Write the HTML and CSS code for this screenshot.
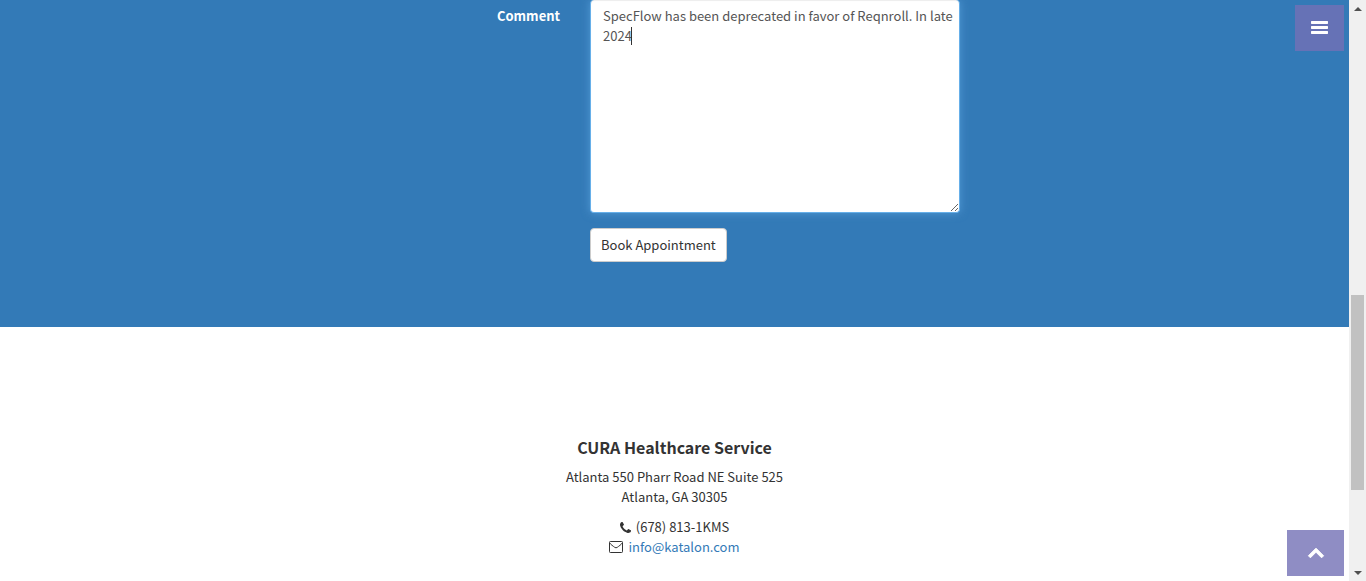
FILE: index.html
```
<!DOCTYPE html>
<html lang="en">
<head>
<meta charset="utf-8">
<title>CURA Healthcare Service</title>
<link rel="stylesheet" href="styles.css">
</head>
<body>
<div class="page">
  <main class="content">
    <section class="appointment">
      <form class="form">
        <label class="form-label" for="comment">Comment</label>
        <div class="field">
          <textarea class="comment" id="comment" name="comment">SpecFlow has been deprecated in favor of Reqnroll. In late 2024</textarea>
          <span class="caret"></span>
        </div>
        <button class="book" type="button">Book Appointment</button>
      </form>
    </section>
    <footer class="footer">
      <h4 class="footer-title">CURA Healthcare Service</h4>
      <p class="footer-text">Atlanta 550 Pharr Road NE Suite 525<br>Atlanta, GA 30305</p>
      <ul class="contacts">
        <li class="contact">
          <svg class="icon-phone" viewBox="0 0 1408 1408" aria-hidden="true"><path fill="currentColor" d="M1408 1112q0 27-10 70.500t-21 68.500q-21 50-122 106-94 51-186 51-27 0-53-3.500t-57.500-12.500-47-14.500-55.500-20.500-49-18q-98-35-175-83-127-79-264-216t-216-264q-48-77-83-175-3-9-18-49t-20.500-55.500-14.500-47-12.500-57.500-3.500-53q0-92 51-186 56-101 106-122 25-11 68.500-21t70.500-10q14 0 21 3 18 6 53 76 11 19 30 54t35 63.500 31 53.500q3 4 17.500 25t21.500 35.500 7 28.500q0 20-28.500 50t-62 55-62 53-28.500 46q0 9 5 22.500t8.500 20.500 14 24 11.500 19q76 137 174 235t235 174q2 1 19 11.500t24 14 20.500 8.500 22.500 5q18 0 46-28.500t53-62 55-62 50-28.500q14 0 28.500 7t35.500 21.500 25 17.500q25 15 53.500 31t63.500 35 54 30q70 35 76 53 3 7 3 21z"/></svg>
          <span>(678) 813-1KMS</span>
        </li>
        <li class="contact">
          <svg class="icon-mail" viewBox="0 0 14 12" aria-hidden="true"><rect x=".5" y=".5" width="13" height="11" rx=".8"/><path d="M.7 2C1.500 3.400 4.500 5.400 5.500 6.200Q7 7.500 8.500 6.200C9.500 5.400 12.500 3.400 13.300 2"/></svg>
          <a class="link" href="mailto:info@katalon.com">info@katalon.com</a>
        </li>
      </ul>
    </footer>
    <button class="float-button menu-toggle" type="button" aria-label="Menu">
      <svg class="icon-bars" viewBox="0 0 17 13" aria-hidden="true"><path fill="currentColor" d="M.5 0h16l.5.5v2l-.5.5H.500L0 2.500v-2zM.5 5h16l.5.5v2l-.5.5H.500L0 7.500v-2zM.5 10h16l.5.5v2l-.5.5H.500l-.5-.5v-2z"/></svg>
    </button>
    <a class="float-button to-top" href="#comment" aria-label="Back to top">
      <svg class="icon-up" viewBox="0 0 18 12" aria-hidden="true"><path fill="currentColor" stroke="currentColor" stroke-linejoin="round" d="M9 1.200 16.600 8.800 14.600 10.800 9 5.200 3.400 10.800 1.400 8.800z"/></svg>
    </a>
  </main>
  <div class="scrollbar" aria-hidden="true">
    <span class="arrow arrow-up"></span>
    <div class="track"><div class="thumb"></div></div>
    <span class="arrow arrow-down"></span>
  </div>
</div>
</body>
</html>
```
FILE: styles.css
```
* {
  box-sizing: border-box;
}

body {
  margin: 0;
  color: #333;
  background: #fff;
  font: 13px/20px "Source Sans Pro", "Noto Sans CJK SC", sans-serif;
}

.page {
  display: grid;
  grid-template-columns: minmax(0, 1fr) 17px;
  height: 100vh;
  overflow: hidden;
}

.content {
  position: relative;
}

.appointment {
  padding-bottom: 65px;
  background: #337ab7;
  color: #fff;
}

.form {
  display: grid;
  grid-template-columns: 1fr 370px 1fr;
  column-gap: 30px;
  row-gap: 15px;
  max-width: 1170px;
  margin: 0 auto;
  padding-left: 201px;
}

.form-label {
  padding-top: 6px;
  font-weight: 700;
  text-align: right;
}

.field {
  position: relative;
}

.comment {
  display: block;
  width: 100%;
  height: 213px;
  padding: 6px 4px 6px 12px;
  border: 1px solid #66afe9;
  border-top: 0;
  border-radius: 4px;
  outline: 0;
  background: #fff;
  box-shadow: inset 0 1px 1px rgba(0, 0, 0, .075), 0 0 8px rgba(102, 175, 233, .6);
  color: #555;
  font: inherit;
  resize: vertical;
}

.caret {
  position: absolute;
  top: 27px;
  left: 41px;
  width: 1px;
  height: 18px;
  background: #333;
}

.book {
  grid-column: 2;
  justify-self: start;
  padding: 6px 10px;
  border: 1px solid #ccc;
  border-radius: 4px;
  background: #fff;
  color: #333;
  font: inherit;
}

.footer {
  padding: 110px 15px 0;
  text-align: center;
}

.footer-title {
  margin: 0 0 10px;
  font-size: 16px;
  line-height: 20px;
  font-weight: 700;
}

.footer-text {
  margin: 0 0 10px;
}

.contacts {
  margin: 0;
  padding: 0;
  list-style: none;
}

.contact {
  display: flex;
  align-items: center;
  justify-content: center;
  gap: 5px;
}

.icon-phone {
  width: 11px;
  height: 11px;
}

.icon-mail {
  width: 14px;
  height: 12px;
  fill: none;
  stroke: currentColor;
}

.link {
  color: #337ab7;
  text-decoration: none;
}

.float-button {
  position: absolute;
  right: 5px;
  display: flex;
  align-items: center;
  justify-content: center;
  height: 46px;
  padding: 0;
  border: 0;
  background: rgba(115, 112, 181, .8);
  color: #fff;
}

.menu-toggle {
  top: 5px;
  width: 49px;
  padding-bottom: 1px;
}

.to-top {
  bottom: 5px;
  width: 57px;
}

.icon-bars {
  width: 17px;
  height: 13px;
}

.icon-up {
  width: 18px;
  height: 12px;
}

.scrollbar {
  display: grid;
  grid-template-rows: 17px 1fr 17px;
  background: #f0f0f0;
}

.track {
  display: grid;
  grid-template-rows: 278fr 195fr 74fr;
  padding: 0 2px;
}

.thumb {
  grid-row: 2;
  background: #c1c1c1;
}

.arrow {
  align-self: center;
  justify-self: center;
  border: 4px solid transparent;
}

.arrow-up {
  border-top: 0;
  border-bottom-color: #505050;
}

.arrow-down {
  border-bottom: 0;
  border-top-color: #505050;
}
```
